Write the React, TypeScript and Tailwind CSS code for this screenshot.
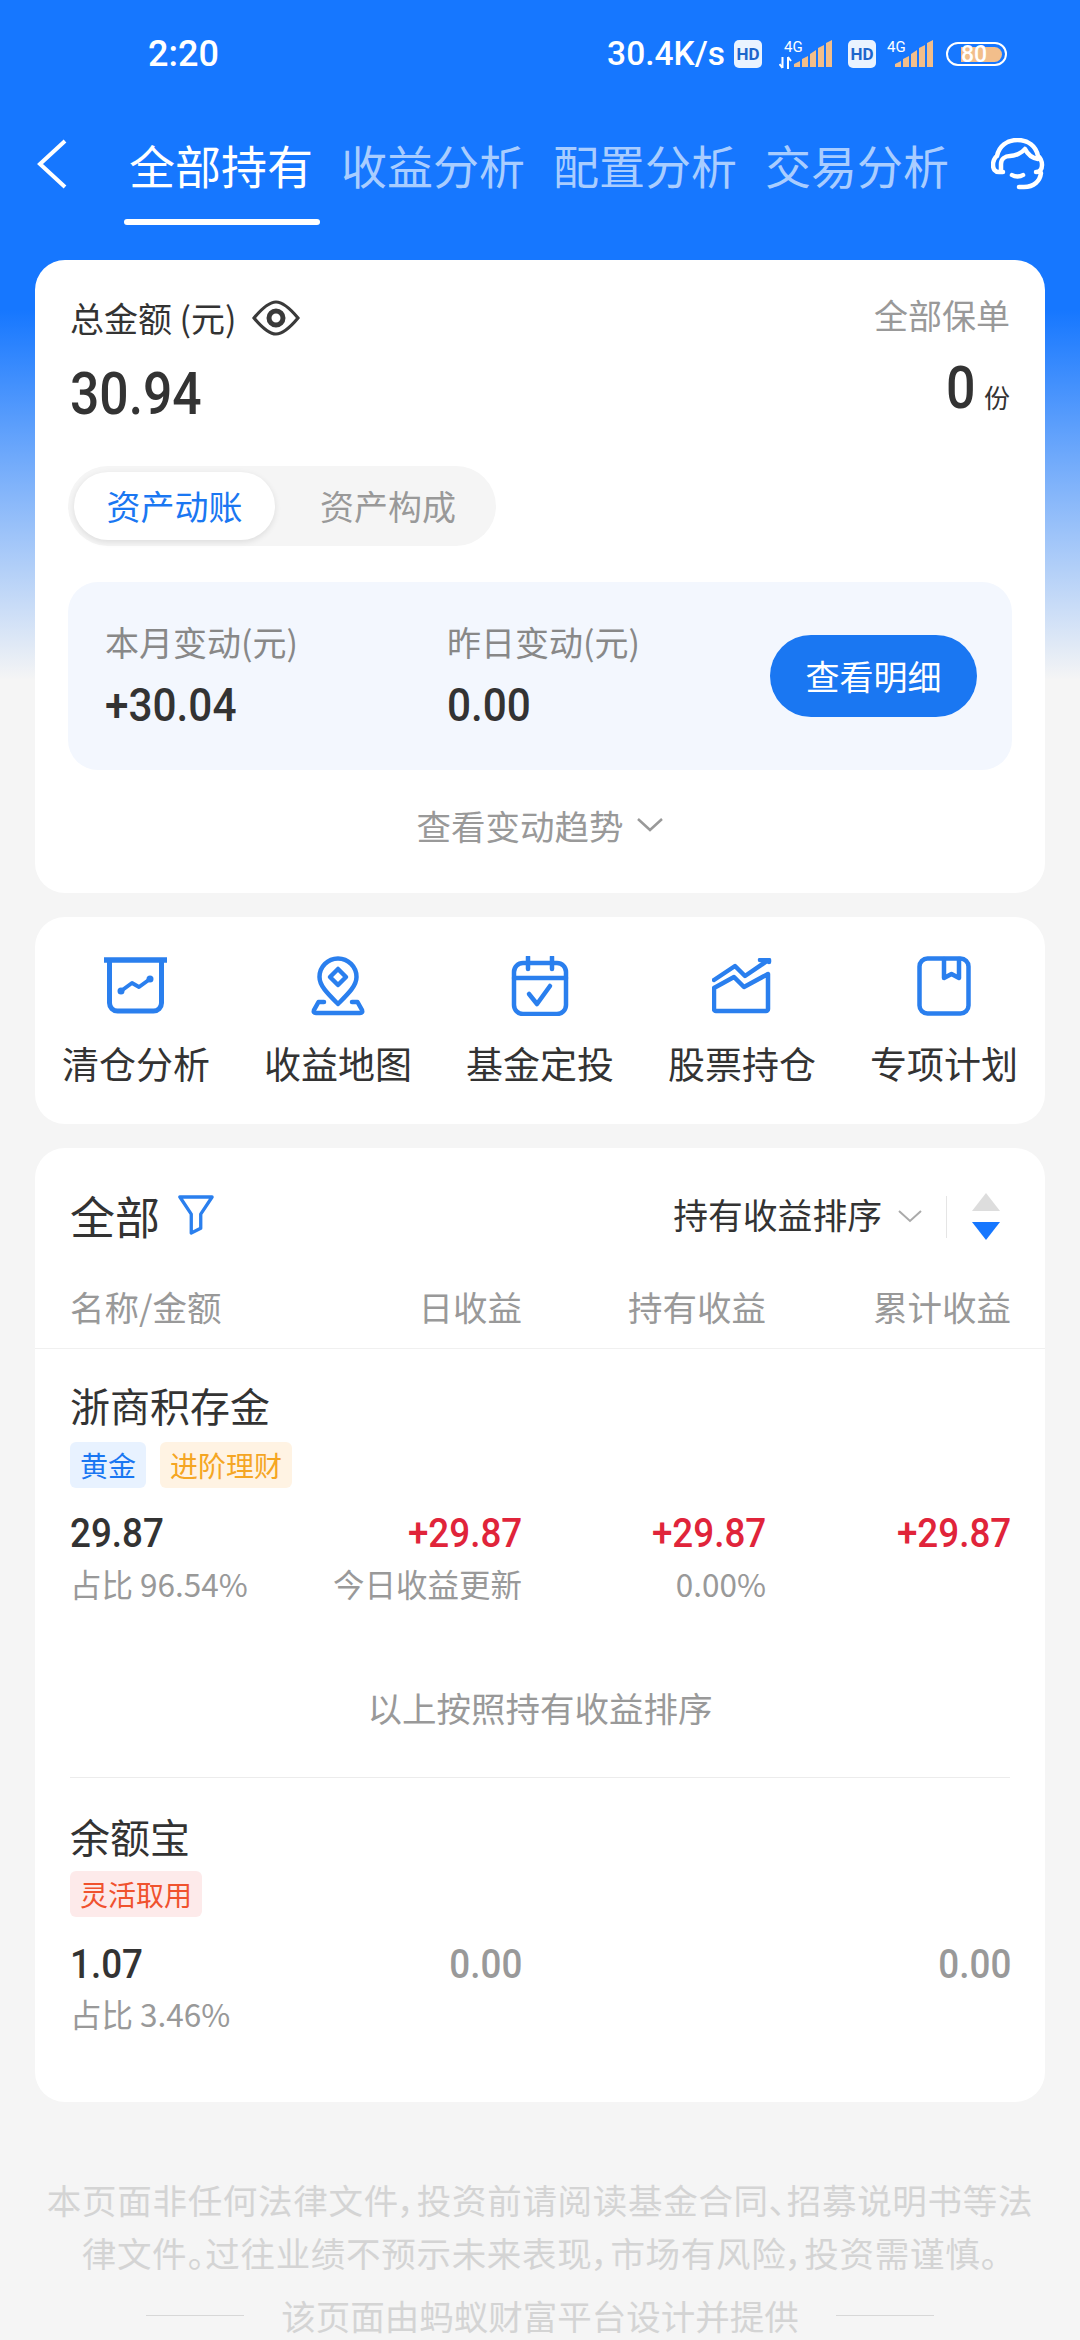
import React from "react";

const num = "font-['Roboto','Noto_Sans_CJK_SC',sans-serif]";

function Signal({ net }: { net?: boolean }) {
  return (
    <svg width={net ? 56 : 50} height="30" viewBox={net ? "0 0 56 30" : "6 0 50 30"} className="shrink-0">
      <text x={net ? 5 : 7} y="13" fontSize="15" fill="#fff" fontFamily="Roboto">4G</text>
      {net && (
        <path d="M3.5 18v11M.5 25l3 4M9 30V18M9 18l3 4" stroke="#fff" strokeWidth="2" fill="none" />
      )}
      <path d="M15 28v-3l6-3v6zM23 28v-8l6-3v11zM31 28V15l6-4v17zM39 28V9l6-3v22zM47 28V4l6-3v27z" fill="#f2be8b" />
    </svg>
  );
}

function Hd() {
  return (
    <span className="flex h-[28px] w-[28px] shrink-0 items-center justify-center rounded-[5px] bg-[#eaf3ff] font-['Roboto'] text-[17px] font-bold leading-none text-[#1d66cc]">HD</span>
  );
}

function StatusBar() {
  return (
    <div className="flex h-[108px] items-center pl-[148px] pr-[73px] text-white">
      <span className={`${num} text-[36px] font-medium leading-none`}>2:20</span>
      <div className="ml-auto flex items-center">
        <span className={`${num} mr-[9px] text-[33.5px] font-medium leading-none`}>30.4K/s</span>
        <Hd />
        <div className="ml-[17px]"><Signal net /></div>
        <div className="ml-[13px]"><Hd /></div>
        <div className="ml-[10px]"><Signal /></div>
        <div className="relative ml-[10px] flex h-[24px] w-[61px] items-center rounded-full border-[2.5px] border-white pl-[13px] pr-[3px]">
          <div className="h-[15px] w-[41px] rounded-r-full bg-[#f2be8b]" />
          <span className={`${num} absolute left-[13px] text-[23px] font-medium leading-none text-white`}>80</span>
        </div>
      </div>
    </div>
  );
}

function Nav() {
  return (
    <div className="relative flex h-[152px] items-start pl-[35px] text-[46px] leading-none">
      <svg width="34" height="50" viewBox="0 0 34 50" className="mt-[31px] mr-[60px] shrink-0" fill="none" stroke="#fff" strokeWidth="4">
        <path d="M30 2 5 25l25 23" />
      </svg>
      <div className="mt-[33px] flex gap-[28px]">
        <div className="relative text-white">
          全部持有
          <div className="absolute left-[-5px] top-[78px] h-[6px] w-[196px] rounded-full bg-white" />
        </div>
        <span className="text-[#a9cdff]">收益分析</span>
        <span className="text-[#a9cdff]">配置分析</span>
        <span className="text-[#a9cdff]">交易分析</span>
      </div>
      <svg width="54" height="54" viewBox="0 0 54 54" fill="none" stroke="#fff" strokeWidth="4.5" strokeLinecap="round" strokeLinejoin="round" className="ml-auto mr-[35px] mt-[30px]">
        <path d="M12 34H8c-4 0-6-3-6-7s2-8 4-9C8 8 16 2 26.5 2S45 8 47 18c2 1 4 5 4 9s-2 7-6 7" />
        <path d="M10 33v-7c0-5 4-8 9-8 5 0 12-3 15-7 3 6 7 9 13 10" />
        <path d="M21 37c3 2 8 2 11 0" />
        <path d="M50 35c-1 8-7 14-17 14h-5" />
      </svg>
    </div>
  );
}

function Eye() {
  return (
    <svg width="48" height="36" viewBox="0 0 48 36" fill="none" stroke="#3a3a3a" strokeWidth="3.2" className="ml-[15px] shrink-0">
      <path d="M2 18C12 6 18 2 24 2s12 4 22 16C36 30 30 34 24 34S12 30 2 18z" />
      <circle cx="24" cy="18" r="7" strokeWidth="5" />
    </svg>
  );
}

function Summary() {
  return (
    <section className="mx-[35px] h-[633px] rounded-[30px] bg-white">
      <div className="flex justify-between px-[35px] pt-[36px]">
        <div>
          <div className="flex h-[44px] items-center text-[34px] leading-none text-[#333]">
            总金额 (元)<Eye />
          </div>
          <div className={`${num} mt-[24px] text-[59px] font-medium leading-none text-[#333]`}>
            <span className="inline-block origin-left scale-x-[0.875]">30.94</span>
          </div>
        </div>
        <div className="flex flex-col items-end">
          <div className="h-[44px] text-[34px] leading-[38px] text-[#999]">全部保单</div>
          <div className="mt-[18px] flex items-baseline leading-none text-[#333]">
            <span className={`${num} inline-block origin-right scale-x-[0.88] text-[59px] font-medium`}>0</span>
            <span className="ml-[8px] text-[26px]">份</span>
          </div>
        </div>
      </div>
      <div className="ml-[33px] mt-[43px] flex h-[80px] w-[428px] items-center rounded-full bg-[#f5f5f5] pl-[6px] text-[34px] leading-none">
        <div className="flex h-[68px] w-[201px] items-center justify-center rounded-full bg-white text-[#1a77f2] shadow-[0_2px_6px_rgba(0,0,0,0.1)]">资产动账</div>
        <div className="ml-[45px] text-[#999]">资产构成</div>
      </div>
      <div className="mx-[33px] mt-[36px] flex h-[188px] items-center rounded-[30px] bg-[#f3f7fe] pl-[37px] pr-[35px]">
        <div className="w-[342px]">
          <div className="text-[34px] leading-none text-[#888]">本月变动(元)</div>
          <div className={`${num} mt-[23px] text-[46px] font-medium leading-none text-[#333]`}>
            <span className="inline-block origin-left scale-x-[0.92]">+30.04</span>
          </div>
        </div>
        <div>
          <div className="text-[34px] leading-none text-[#888]">昨日变动(元)</div>
          <div className={`${num} mt-[23px] text-[46px] font-medium leading-none text-[#333]`}>
            <span className="inline-block origin-left scale-x-[0.92]">0.00</span>
          </div>
        </div>
        <div className="ml-auto flex h-[82px] w-[207px] items-center justify-center rounded-full bg-[#1a77f2] text-[34px] leading-none text-white">查看明细</div>
      </div>
      <div className="mt-[38px] flex items-center justify-center text-[34.5px] leading-none text-[#999]">
        查看变动趋势
        <svg width="28" height="16" viewBox="0 0 28 16" fill="none" stroke="#999" strokeWidth="2.5" className="ml-[12px]">
          <path d="M2 2l12 11L26 2" />
        </svg>
      </div>
    </section>
  );
}

const stroke = { fill: "none", stroke: "#2a7fee", strokeWidth: 4.5, strokeLinejoin: "round" as const, strokeLinecap: "round" as const };

function Ico1() {
  return (
    <svg width="64" height="58" viewBox="0 0 64 58" {...stroke}>
      <path d="M0 3h63" strokeWidth="5.5" strokeLinecap="butt" />
      <path d="M5.5 4v42a8 8 0 0 0 8 8h36a8 8 0 0 0 8-8V4" strokeWidth="5" />
      <path d="M17 34l11-8 7 4 11-8" strokeWidth="4" />
      <circle cx="17" cy="34" r="3.5" fill="#2a7fee" stroke="none" />
      <circle cx="46" cy="22" r="3.5" fill="#2a7fee" stroke="none" />
    </svg>
  );
}
function Ico2() {
  return (
    <svg width="54" height="60" viewBox="0 0 54 60" {...stroke}>
      <path d="M27 48C17 38 8.5 30 8.5 21a18.5 18.5 0 0 1 37 0C45.5 30 37 38 27 48z" />
      <path d="M27 13l8 8-8 8-8-8z" />
      <path d="M13 46H7.5L3 54q-1 3 2 3h44q3 0 2-3l-4.500-8H41" />
    </svg>
  );
}
function Ico3() {
  return (
    <svg width="58" height="60" viewBox="0 0 58 60" {...stroke}>
      <rect x="3" y="7" width="52" height="51" rx="9" />
      <path d="M3 22h52" />
      <path d="M17 1v12M41 1v12" />
      <path d="M18 38l8 10 13-18" />
    </svg>
  );
}
function Ico4() {
  return (
    <svg width="60" height="56" viewBox="0 0 60 56" {...stroke}>
      <path d="M2 22 23 8l10 10L55 3" />
      <path d="M48 2h9v2" />
      <path d="M2 30 22 19l10 10 24-13v35a2 2 0 0 1-2 2H4a2 2 0 0 1-2-2z" />
    </svg>
  );
}
function Ico5() {
  return (
    <svg width="54" height="60" viewBox="0 0 54 60" {...stroke}>
      <rect x="2.500" y="2.500" width="49" height="55" rx="8" />
      <path d="M27 3v19l7.500-4 7.500 4V3" />
    </svg>
  );
}

const tools: [string, React.ReactNode][] = [
  ["清仓分析", <Ico1 />],
  ["收益地图", <Ico2 />],
  ["基金定投", <Ico3 />],
  ["股票持仓", <Ico4 />],
  ["专项计划", <Ico5 />],
];

function Tools() {
  return (
    <section className="mx-[35px] mt-[24px] grid h-[207px] grid-cols-5 rounded-[30px] bg-white pt-[38px]">
      {tools.map(([l, i]) => (
        <div key={l} className="flex flex-col items-center">
          <div className="flex h-[62px] items-center">{i}</div>
          <div className="mt-[28px] whitespace-nowrap text-[37px] leading-none text-[#333]">{l}</div>
        </div>
      ))}
    </section>
  );
}

function Tag({ c, children }: { c: string; children: React.ReactNode }) {
  return <span className={`flex h-[46px] items-center rounded-[6px] px-[10px] text-[28px] leading-none ${c}`}>{children}</span>;
}

function Cols({ a, b, c, d, cls = "" }: { a?: React.ReactNode; b?: React.ReactNode; c?: React.ReactNode; d?: React.ReactNode; cls?: string }) {
  return (
    <div className={`grid grid-cols-[200px_252px_244px_245px] leading-none ${cls}`}>
      <div className="whitespace-nowrap">{a}</div>
      <div className="whitespace-nowrap text-right">{b}</div>
      <div className="text-right">{c}</div>
      <div className="text-right">{d}</div>
    </div>
  );
}

function V({ color, left, children }: { color: string; left?: boolean; children: React.ReactNode }) {
  return (
    <span className={`${num} inline-block text-[40px] font-medium ${color} ${left ? "origin-left" : "origin-right"} scale-x-[0.92]`}>{children}</span>
  );
}

function Holdings() {
  const red = "text-[#e0243a]";
  const sub = "text-[31.5px] text-[#999]";
  return (
    <section className="mx-[35px] mt-[24px] h-[954px] rounded-[30px] bg-white">
      <div className="flex h-[94px] items-end px-[35px]">
        <div className="mb-[4px] flex items-center text-[45px] leading-none text-[#333]">
          全部
          <svg width="36" height="40" viewBox="0 0 38 42" fill="none" stroke="#2a7fee" strokeWidth="3.5" strokeLinejoin="round" className="ml-[18px] mb-[2px]">
            <path d="M2 2h34L24 20v15l-10 5V20z" />
          </svg>
        </div>
        <div className="ml-auto mr-[9px] flex items-center">
          <span className="mb-[5px] text-[34.8px] leading-none text-[#333]">持有收益排序</span>
          <svg width="26" height="14" viewBox="0 0 26 14" fill="none" stroke="#aaa" strokeWidth="2" className="ml-[15px] mb-[3px]">
            <path d="M2 2l11 10L24 2" />
          </svg>
          <div className="ml-[23px] h-[42px] w-px bg-[#e5e5e5]" />
          <svg width="30" height="50" viewBox="0 0 30 50" className="ml-[24px]">
            <path d="M15 1l14 18H1z" fill="#ddd" />
            <path d="M1 30h28L15 48z" fill="#1677ff" />
          </svg>
        </div>
      </div>
      <Cols
        cls="mt-[47px] px-[35px] text-[34.5px] text-[#999]"
        a="名称/金额"
        b="日收益"
        c="持有收益"
        d="累计收益"
      />
      <div className="mt-[24px] h-px bg-[#f0f0f0]" />
      <div className="px-[35px]">
        <div className="mt-[36px] text-[40px] leading-none text-[#333]">浙商积存金</div>
        <div className="mt-[17px] flex gap-[14px]">
          <Tag c="bg-[#e8f2ff] text-[#1a77f2]">黄金</Tag>
          <Tag c="bg-[#fff3e3] text-[#f5a623]">进阶理财</Tag>
        </div>
        <Cols
          cls="mt-[26px]"
          a={<V left color="text-[#333]">29.87</V>}
          b={<V color={red}>+29.87</V>}
          c={<V color={red}>+29.87</V>}
          d={<V color={red}>+29.87</V>}
        />
        <Cols
          cls="mt-[14px]"
          a={<span className={sub}>占比 96.54%</span>}
          b={<span className={sub}>今日收益更新</span>}
          c={<span className={sub}>0.00%</span>}
        />
        <div className="mt-[91px] text-center text-[34.5px] leading-none text-[#999]">以上按照持有收益排序</div>
        <div className="mt-[52px] h-px bg-[#ececec]" />
        <div className="mt-[38px] text-[40px] leading-none text-[#333]">余额宝</div>
        <div className="mt-[15px] flex">
          <Tag c="bg-[#fdeaea] text-[#f0522e]">灵活取用</Tag>
        </div>
        <Cols
          cls="mt-[28px]"
          a={<V left color="text-[#333]">1.07</V>}
          b={<V color="text-[#999]">0.00</V>}
          d={<V color="text-[#999]">0.00</V>}
        />
        <Cols cls="mt-[13px]" a={<span className={sub}>占比 3.46%</span>} />
      </div>
    </section>
  );
}

function Footer() {
  return (
    <footer className="mt-[71px] px-[45px] text-center text-[34.5px] leading-[53px] text-[#d4d4d4] [font-feature-settings:'palt']">
      <p className="tracking-[0.7px]">本页面非任何法律文件，投资前请阅读基金合同、招募说明书等法律文件。过往业绩不预示未来表现，市场有风险，投资需谨慎。</p>
      <div className="mt-[10px] flex items-center justify-center">
        <div className="h-px w-[98px] bg-[#d8d8d8]" />
        <span className="mx-[37px] whitespace-nowrap">该页面由蚂蚁财富平台设计并提供</span>
        <div className="h-px w-[98px] bg-[#d8d8d8]" />
      </div>
    </footer>
  );
}

export default function App() {
  return (
    <div className="h-[2340px] w-[1080px] overflow-hidden bg-[linear-gradient(180deg,#1677ff_0px,#1677ff_310px,#f5f5f5_680px)] font-['Noto_Sans_CJK_SC','Noto_Sans',sans-serif]">
      <StatusBar />
      <Nav />
      <Summary />
      <Tools />
      <Holdings />
      <Footer />
    </div>
  );
}
